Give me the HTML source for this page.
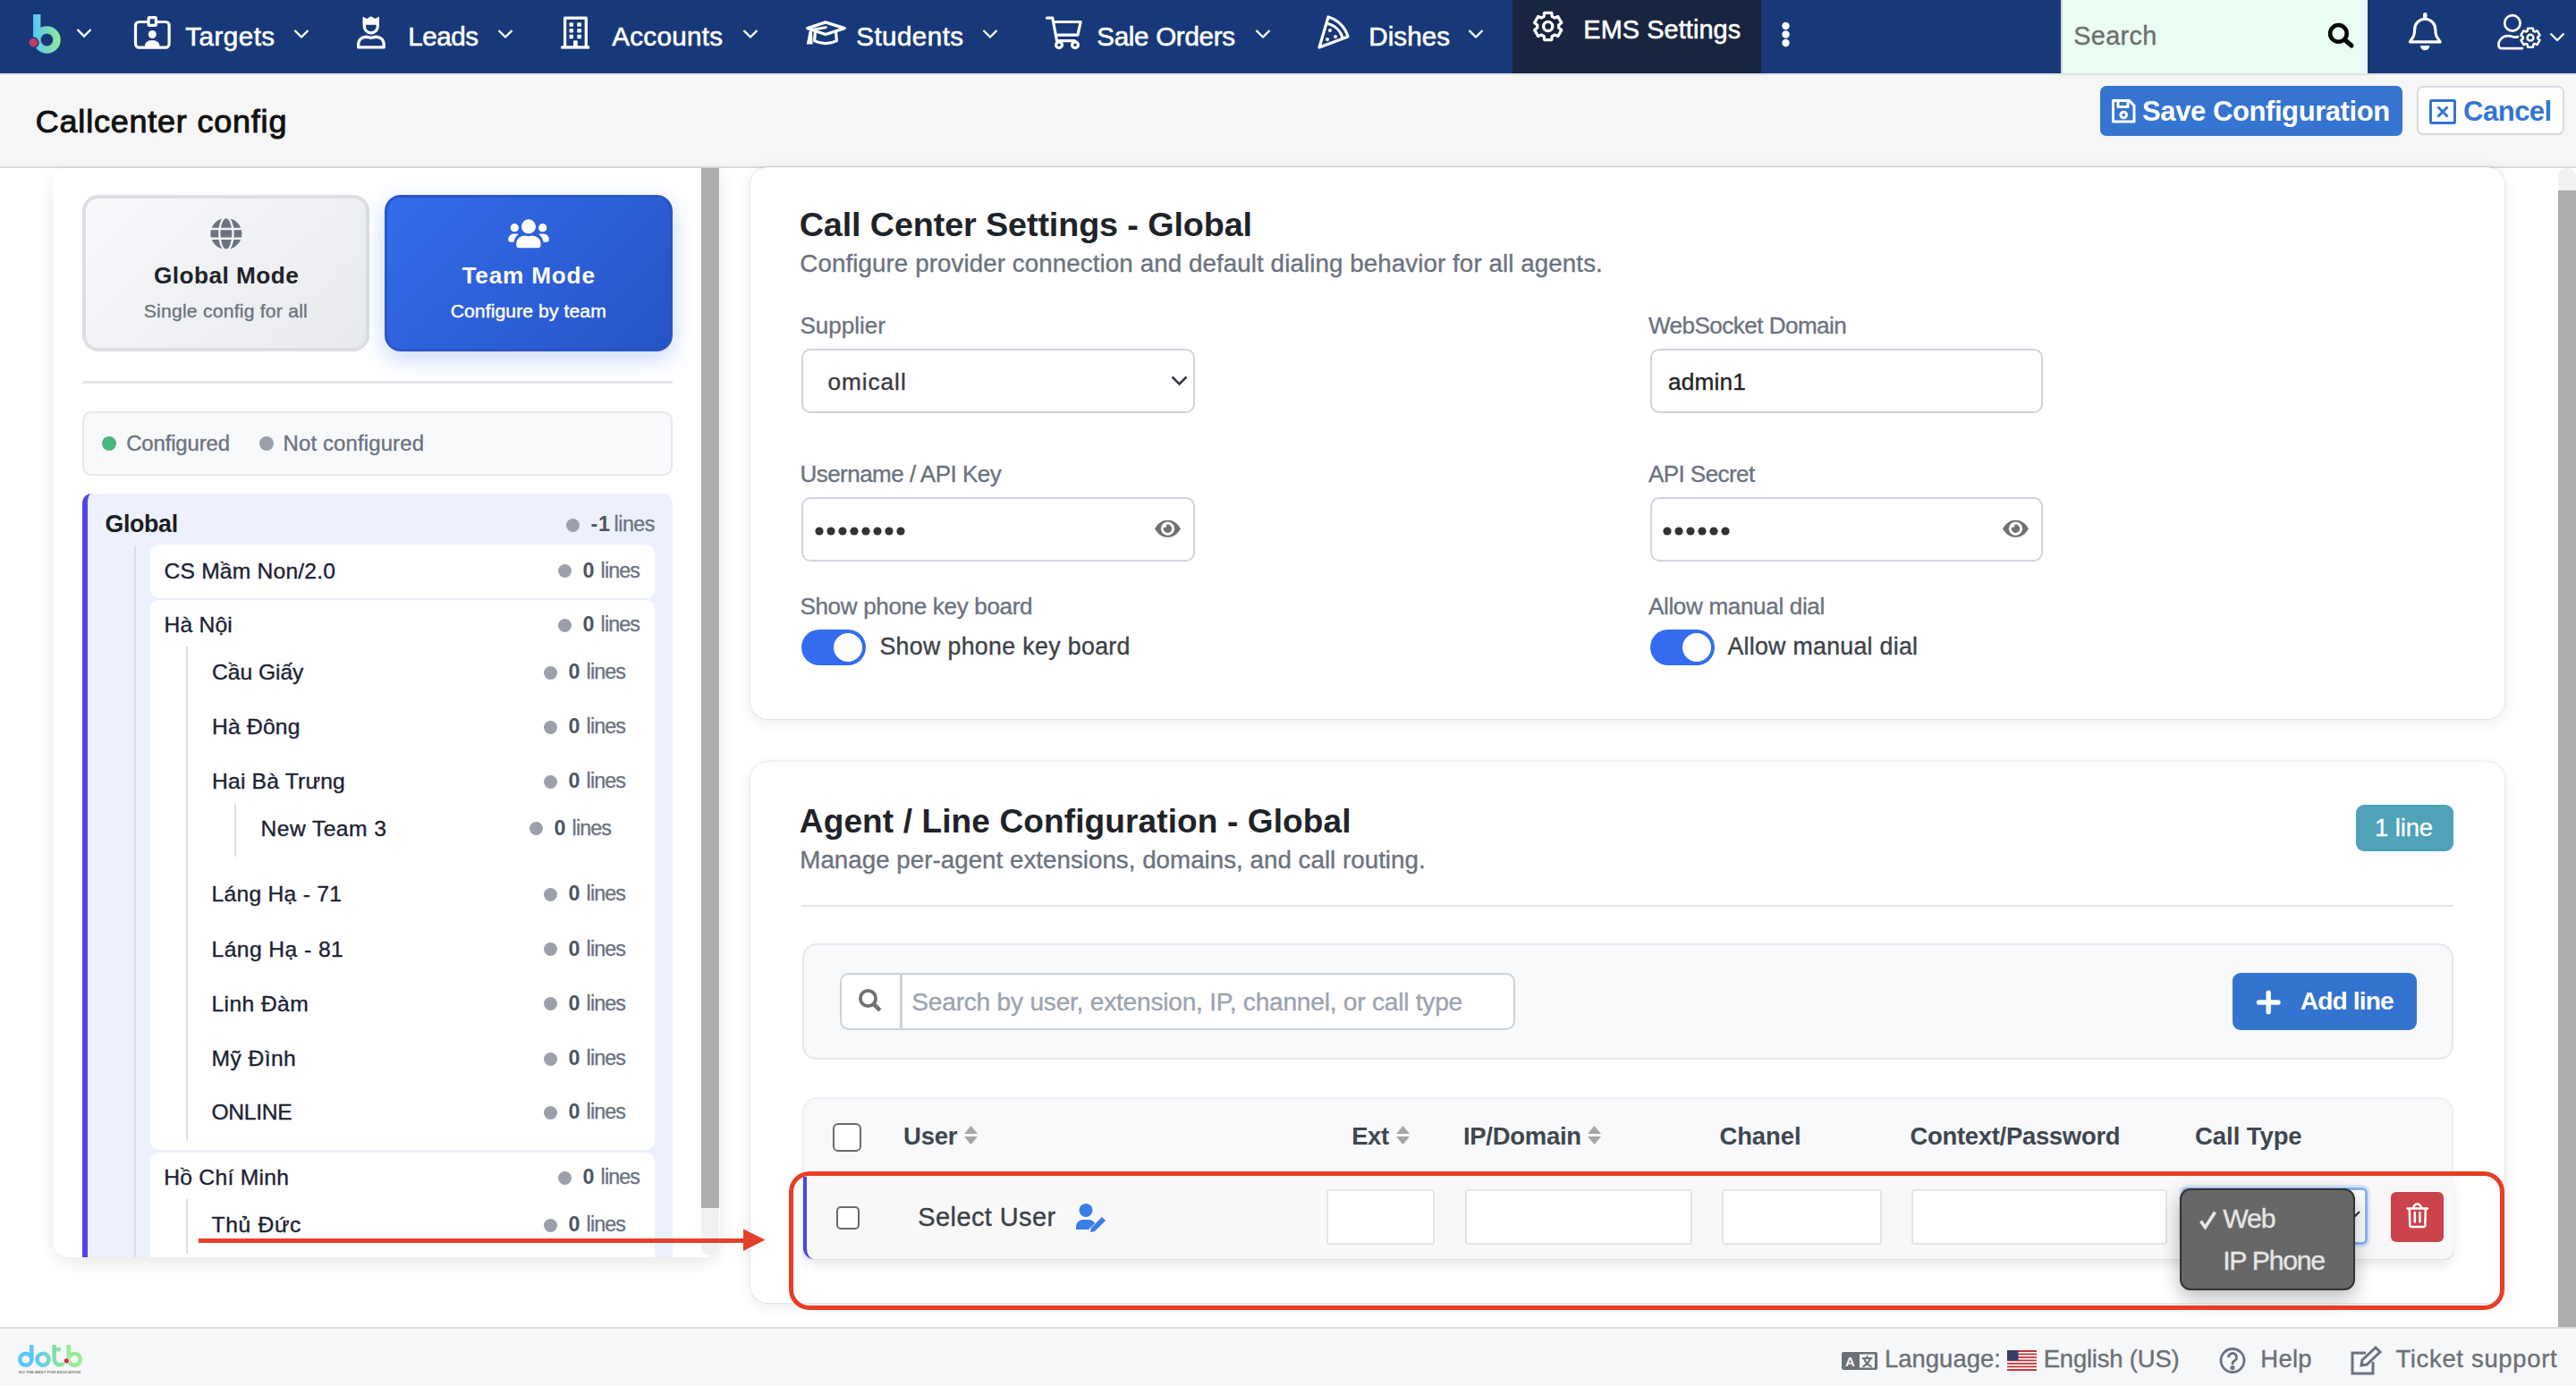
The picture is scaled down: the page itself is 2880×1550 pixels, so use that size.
<!DOCTYPE html>
<html><head><meta charset="utf-8">
<style>
*{box-sizing:border-box;margin:0;padding:0}
html,body{width:2880px;height:1550px;overflow:hidden;background:#fff;font-family:"Liberation Sans",sans-serif}
.a{position:absolute}
.t{position:absolute;white-space:nowrap;line-height:1;font-family:"Liberation Sans",sans-serif}
.dot{position:absolute;width:15px;height:15px;border-radius:50%;background:#9ca0ab}
svg{position:absolute;overflow:visible}
</style></head><body>
<!-- NAVBAR -->
<div class="a" style="left:0;top:0;width:2880px;height:82px;background:#183979"></div>
<div class="a" style="left:1691px;top:0;width:278px;height:82px;background:#192441"></div>
<div class="a" style="left:2304px;top:0;width:343px;height:82px;background:#e9fdf2;border-left:2px solid #d6d6d6"></div>
<!-- logo b -->
<svg style="left:0;top:0" width="120" height="82">
 <defs>
  <linearGradient id="lg1" gradientUnits="userSpaceOnUse" x1="37" x2="68" y1="0" y2="0"><stop offset="0" stop-color="#58c6f4"/><stop offset="1" stop-color="#95e996"/></linearGradient>
  <linearGradient id="lg2" gradientUnits="userSpaceOnUse" x1="32" x2="43" y1="0" y2="0"><stop offset="0" stop-color="#a83e9a"/><stop offset="1" stop-color="#e2352a"/></linearGradient>
 </defs>
 <rect x="37.1" y="16" width="8.3" height="30" fill="url(#lg1)"/>
 <circle cx="52.4" cy="44.5" r="11.1" fill="none" stroke="url(#lg1)" stroke-width="8.4"/>
 <circle cx="37.3" cy="47.7" r="5.6" fill="url(#lg2)" stroke="#183979" stroke-width="1.6"/>
 <polyline points="86.5,33 94,40.5 101.5,33" fill="none" stroke="#fff" stroke-width="2.4"/>
</svg>
<!-- nav icons -->
<svg style="left:0;top:0" width="2880" height="82" fill="none" stroke="#fff" stroke-width="3.2" stroke-linejoin="round">
 <!-- targets badge -->
 <rect x="151.5" y="24.5" width="37.6" height="28.7" rx="4"/>
 <rect x="166.1" y="19.7" width="8.3" height="8.6" rx="1" fill="#183979"/>
 <circle cx="170.3" cy="38.5" r="4.5" fill="#fff" stroke="none"/>
 <path d="M162 53 v-3 a8.2 5.5 0 0 1 16.3 0 v3 z" fill="#fff" stroke="none"/>
 <polyline points="329.5,34 337,41.5 344.5,34" stroke-width="2.4"/>
 <!-- leads -->
 <path d="M405.7 18.5 L410 21 L414.8 18.3 L419.5 21 L423.9 18.5 V27.7 H405.7 Z" fill="#fff" stroke="none"/>
 <path d="M407.35 20 V29.4 A7.45 7.45 0 0 0 422.25 29.4 V20" stroke-width="3.3"/>
 <path d="M400.65 52.95 V50 C400.65 44 405 41.25 409 41.25 C412 41.25 413.5 42.3 414.9 42.3 C416.3 42.3 417.8 41.25 420.8 41.25 C424.8 41.25 429.15 44 429.15 50 V52.95 Z" stroke-width="3.3"/>
 <polyline points="557.5,34 565,41.5 572.5,34" stroke-width="2.4"/>
 <!-- accounts building -->
 <path d="M631.6 52 V20.1 h23.7 V52" stroke-width="3.3"/>
 <path d="M627.3 52.9 h31.7" stroke-width="3.4"/>
 <g fill="#fff" stroke="none"><rect x="636.5" y="25.2" width="4.5" height="4.5" rx="1"/><rect x="645.3" y="25.2" width="4.6" height="4.5" rx="1"/><rect x="636.5" y="32" width="4.5" height="4.4" rx="1"/><rect x="645.3" y="32" width="4.6" height="4.4" rx="1"/><rect x="636.5" y="38.8" width="4.5" height="4.4" rx="1"/><rect x="645.3" y="38.8" width="4.6" height="4.4" rx="1"/><rect x="641" y="45.2" width="4.7" height="7" rx="1"/></g>
 <polyline points="831.5,34 839,41.5 846.5,34" stroke-width="2.4"/>
 <!-- students grad cap -->
 <path d="M902.6 31.6 L923 24.9 L944.2 31.6 L923 38.5 Z" stroke-width="3.3"/>
 <path d="M923.5 30.6 L906.5 33.5" stroke-width="2.8" stroke-linecap="round"/>
 <path d="M904.6 35 L908 35 L908.6 49.6 L901.8 49.6 Z" fill="#fff" stroke="none"/>
 <path d="M911.4 36.2 L910.6 45.6 Q923 51.8 935.4 45.6 L934.6 36.2" stroke-width="3.2"/>
 <polyline points="1099.5,34 1107,41.5 1114.5,34" stroke-width="2.4"/>
 <!-- cart -->
 <path d="M1170.5 20.2 h6.3 l4.8 25.5 h19.8" stroke-linecap="round"/>
 <path d="M1177.8 24.5 h30.4 l-3.3 14.7 h-23.6"/>
 <circle cx="1184" cy="50.2" r="3.4"/><circle cx="1202" cy="50.2" r="3.4"/>
 <polyline points="1404.5,34 1412,41.5 1419.5,34" stroke-width="2.4"/>
 <!-- pizza -->
 <path d="M1475 53 l10 -34 a32 32 0 0 1 22 22 z"/>
 <path d="M1483 26 a24 24 0 0 1 18 16"/>
 <g fill="#fff" stroke="none"><circle cx="1487" cy="34" r="2"/><circle cx="1493" cy="41" r="2"/><circle cx="1484" cy="44" r="2"/></g>
 <polyline points="1642.5,34 1650,41.5 1657.5,34" stroke-width="2.4"/>
 <!-- gear -->
 <path d="M1726.10 18.42 L1726.70 14.42 L1734.70 14.42 L1735.30 18.42 A12.0 12.0 0 0 1 1738.00 19.97 L1741.76 18.50 L1745.76 25.42 L1742.60 27.94 A12.0 12.0 0 0 1 1742.60 31.06 L1745.76 33.58 L1741.76 40.50 L1738.00 39.03 A12.0 12.0 0 0 1 1735.30 40.58 L1734.70 44.58 L1726.70 44.58 L1726.10 40.58 A12.0 12.0 0 0 1 1723.40 39.03 L1719.64 40.50 L1715.64 33.58 L1718.80 31.06 A12.0 12.0 0 0 1 1718.80 27.94 L1715.64 25.42 L1719.64 18.50 L1723.40 19.97 A12.0 12.0 0 0 1 1726.10 18.42 Z" stroke-width="3.3"/><circle cx="1730.7" cy="29.5" r="5.1" stroke-width="3.4"/>
 <!-- kebab -->
 <g fill="#fff" stroke="none"><circle cx="1996.5" cy="29" r="4.2"/><circle cx="1996.5" cy="38.5" r="4.2"/><circle cx="1996.5" cy="48" r="4.2"/></g>
 <!-- bell -->
 <path d="M2694.4 46.8 L2698.4 40.5 Q2699.6 37.5 2699.6 33 A11.6 11.8 0 0 1 2722.8 33 Q2722.8 37.5 2724 40.5 L2728.1 46.8 Z"/>
 <path d="M2706 51 a5.2 5.2 0 0 0 10.4 0 z" fill="#fff" stroke="none"/>
 <rect x="2709" y="14" width="4.6" height="7" rx="2.3" fill="#fff" stroke="none"/>
 <!-- user gear -->
 <circle cx="2808.9" cy="25.9" r="8.7" stroke-width="2.7"/>
 <path d="M2820 54.1 H2796.5 a3 3 0 0 1 -3 -3 v-1.5 a10.5 9.5 0 0 1 10.5 -9.5 q3 0 5 1 q2.5 1 6 0" stroke-width="2.7" stroke-linecap="round"/>
 <path d="M2825.60 34.74 L2826.10 31.69 L2831.90 31.69 L2832.40 34.74 A8.2 8.2 0 0 1 2833.76 35.52 L2836.65 34.43 L2839.55 39.46 L2837.16 41.41 A8.2 8.2 0 0 1 2837.16 42.99 L2839.55 44.94 L2836.65 49.97 L2833.76 48.88 A8.2 8.2 0 0 1 2832.40 49.66 L2831.90 52.71 L2826.10 52.71 L2825.60 49.66 A8.2 8.2 0 0 1 2824.24 48.88 L2821.35 49.97 L2818.45 44.94 L2820.84 42.99 A8.2 8.2 0 0 1 2820.84 41.41 L2818.45 39.46 L2821.35 34.43 L2824.24 35.52 A8.2 8.2 0 0 1 2825.60 34.74 Z" stroke-width="2.5" fill="#183979"/><circle cx="2829" cy="42.2" r="3.4" stroke-width="2.5"/>
 <polyline points="2851.5,37.5 2859,45 2866.5,37.5" stroke-width="2.4"/>
</svg>
<!-- search icon black -->
<svg style="left:2600px;top:22px" width="34" height="34"><circle cx="14.4" cy="15.4" r="9.3" fill="none" stroke="#000" stroke-width="4.5"/><line x1="21.5" y1="22.5" x2="29" y2="29" stroke="#000" stroke-width="5" stroke-linecap="round"/></svg>

<!-- PAGE HEADER -->
<div class="a" style="left:0;top:82px;width:2880px;height:106px;background:#f6f6f6;border-top:2px solid #dfe3e8;border-bottom:2px solid #dadada"></div>
<div class="a" style="left:2348px;top:96px;width:338px;height:56px;background:#3574d0;border-radius:7px"></div>
<svg style="left:2360px;top:110px" width="30" height="30" fill="none" stroke="#fff" stroke-width="3" stroke-linejoin="round"><path d="M2.5 2.5 h18 l5.5 5.5 v18 h-23.5 z"/><path d="M8 2.5 v7 h11 v-7"/><circle cx="14.2" cy="18.5" r="3.3"/></svg>
<div class="a" style="left:2702px;top:96px;width:165px;height:55px;background:#fff;border:2px solid #d7dbe2;border-radius:7px"></div>
<svg style="left:2715px;top:110px" width="32" height="30" fill="none" stroke="#3575d3" stroke-width="3"><rect x="2.5" y="2.5" width="27" height="25" rx="1"/><path d="M10.5 9.5 l11 11 M21.5 9.5 l-11 11"/></svg>

<!-- MAIN AREA -->
<div class="a" style="left:0;top:188px;width:2880px;height:1296px;background:#fff"></div>
<!-- right page scrollbar -->
<div class="a" style="left:2860px;top:188px;width:20px;height:1296px;background:#f1f1f1;border-radius:10px 10px 0 0"></div>
<div class="a" style="left:2860px;top:213px;width:20px;height:1271px;background:#adadad"></div>

<!-- LEFT CARD -->
<div class="a" style="left:59px;top:188px;width:746px;height:1218px;background:#fff;border-radius:16px 0 18px 18px;box-shadow:0 6px 18px rgba(0,0,0,0.09)"></div>
<div class="a" style="left:59px;top:188px;width:725px;height:1218px;overflow:hidden;border-radius:16px 0 0 18px">
 <div class="a" style="left:33px;top:30px;width:321px;height:175px;border:4px solid #dcdee3;border-radius:18px;background:linear-gradient(135deg,#f7f8fa,#e8eaee)"></div>
 <div class="a" style="left:371px;top:30px;width:322px;height:175px;border:3px solid #2a55c6;border-radius:18px;background:linear-gradient(135deg,#346cec,#2654c4);box-shadow:0 8px 26px rgba(52,108,236,0.28)"></div>
 <div class="a" style="left:33px;top:238px;width:660px;height:3px;background:#e3e5ea"></div>
 <div class="a" style="left:33px;top:272px;width:660px;height:72px;background:#f8f9fb;border:2px solid #e6e8ec;border-radius:10px"></div>
 <div class="a" style="left:55px;top:300px;width:16px;height:16px;border-radius:50%;background:#4bb67f"></div>
 <div class="a" style="left:231px;top:300px;width:16px;height:16px;border-radius:50%;background:#9ca0ab"></div>
 <!-- tree -->
 <div class="a" style="left:33px;top:364px;width:660px;height:900px;background:#edf1fd;border-left:6px solid #4f46e5;border-radius:10px 10px 0 0"></div>
 <div class="a" style="left:91px;top:422px;width:2px;height:800px;background:#dcdfe7"></div>
 <div class="a" style="left:109px;top:421px;width:564px;height:60px;background:#fff;border-radius:10px"></div>
 <div class="a" style="left:109px;top:483px;width:564px;height:615px;background:#fff;border-radius:10px"></div>
 <div class="a" style="left:149px;top:535px;width:2px;height:552px;background:#dcdfe7"></div>
 <div class="a" style="left:203px;top:711px;width:2px;height:59px;background:#dcdfe7"></div>
 <div class="a" style="left:109px;top:1101px;width:564px;height:200px;background:#fff;border-radius:10px"></div>
 <div class="a" style="left:149px;top:1153px;width:2px;height:61px;background:#dcdfe7"></div>
 <!-- icons -->
 <svg style="left:176px;top:55px" width="36" height="38"><circle cx="17.9" cy="18.4" r="17.5" fill="#6b7280"/><g fill="none" stroke="#f2f3f5" stroke-width="2.4"><ellipse cx="17.9" cy="18.4" rx="7.6" ry="18.4"/><line x1="0" y1="13" x2="36" y2="13"/><line x1="0" y1="23.8" x2="36" y2="23.8"/></g></svg>
 <svg style="left:509px;top:57px" width="46" height="33" fill="#fff"><circle cx="23" cy="8.3" r="8"/><circle cx="7.3" cy="9.7" r="4.6"/><circle cx="38.7" cy="9.7" r="4.6"/><path d="M9.3 29 v-2 a10 8.5 0 0 1 10 -8.5 q3.7 1.5 7.4 0 a10 8.5 0 0 1 9.8 8.5 v2 a3.2 3.2 0 0 1 -3.2 3.2 h-20.8 a3.2 3.2 0 0 1 -3.2 -3.2 z"/><path d="M0.2 22.5 a6 6 0 0 1 6 -6 h5.8 q-4.5 3.5 -5.6 9.3 h-3 a3.2 3.2 0 0 1 -3.2 -3.3 z"/><path d="M45.8 22.5 a6 6 0 0 0 -6 -6 h-5.8 q4.5 3.5 5.6 9.3 h3 a3.2 3.2 0 0 0 3.2 -3.3 z"/></svg>
</div>
<!-- left inner scrollbar -->
<div class="a" style="left:784px;top:188px;width:20px;height:1163px;background:#adadad"></div>
<div class="a" style="left:784px;top:1351px;width:20px;height:53px;background:#f1f1f1;border-radius:0 0 10px 10px"></div>
<div class="dot" style="left:624.0px;top:631.1px"></div><div class="dot" style="left:624.0px;top:691.5px"></div><div class="dot" style="left:608.0px;top:744.5px"></div><div class="dot" style="left:608.0px;top:805.5px"></div><div class="dot" style="left:608.0px;top:866.5px"></div><div class="dot" style="left:592.0px;top:919.0px"></div><div class="dot" style="left:608.0px;top:992.5px"></div><div class="dot" style="left:608.0px;top:1054.0px"></div><div class="dot" style="left:608.0px;top:1115.0px"></div><div class="dot" style="left:608.0px;top:1176.5px"></div><div class="dot" style="left:608.0px;top:1236.5px"></div><div class="dot" style="left:624.0px;top:1309.5px"></div><div class="dot" style="left:608.0px;top:1362.5px"></div><div class="dot" style="left:633.0px;top:579.5px"></div>

<!-- CARD 1 -->
<div class="a" style="left:839px;top:187px;width:1961px;height:617px;background:#fff;border-radius:20px;box-shadow:0 0 0 1.5px rgba(0,0,0,0.045),0 4px 18px rgba(0,0,0,0.08)"></div>
<div class="a" style="left:896px;top:390px;width:440px;height:71.5px;border:2px solid #cfd5de;border-radius:10px;background:#fff"></div>
<svg style="left:1308px;top:418px" width="22" height="16"><polyline points="2.5,3.5 10.5,11.5 18.5,3.5" fill="none" stroke="#343a40" stroke-width="2.6"/></svg>
<div class="a" style="left:1844.5px;top:390px;width:439px;height:71.5px;border:2px solid #cfd5de;border-radius:10px;background:#fff"></div>
<div class="a" style="left:896px;top:556px;width:440px;height:72px;border:2px solid #cfd5de;border-radius:10px;background:#fff"></div>
<div class="a" style="left:1844.5px;top:556px;width:439px;height:72px;border:2px solid #cfd5de;border-radius:10px;background:#fff"></div>
<!-- password dots -->
<svg style="left:910px;top:586px" width="110" height="16" fill="#333"><circle cx="6" cy="8" r="4.6"/><circle cx="19" cy="8" r="4.6"/><circle cx="32" cy="8" r="4.6"/><circle cx="45" cy="8" r="4.6"/><circle cx="58" cy="8" r="4.6"/><circle cx="71" cy="8" r="4.6"/><circle cx="84" cy="8" r="4.6"/><circle cx="97" cy="8" r="4.6"/></svg>
<svg style="left:1858px;top:586px" width="84" height="16" fill="#333"><circle cx="6" cy="8" r="4.6"/><circle cx="19" cy="8" r="4.6"/><circle cx="32" cy="8" r="4.6"/><circle cx="45" cy="8" r="4.6"/><circle cx="58" cy="8" r="4.6"/><circle cx="71" cy="8" r="4.6"/></svg>
<!-- eyes -->
<svg style="left:1290px;top:580px" width="32" height="22"><path d="M1 11.2 C6 3 11 1.7 15.5 1.7 C20 1.7 25 3 30 11.2 C25 19.4 20 20.8 15.5 20.8 C11 20.8 6 19.4 1 11.2 Z" fill="#707070"/><circle cx="15.5" cy="11.2" r="7.6" fill="#fff"/><circle cx="15.5" cy="11.2" r="4.7" fill="#707070"/><circle cx="12" cy="7.8" r="2.3" fill="#fff"/></svg>
<svg style="left:2238px;top:580px" width="32" height="22"><path d="M1 11.2 C6 3 11 1.7 15.5 1.7 C20 1.7 25 3 30 11.2 C25 19.4 20 20.8 15.5 20.8 C11 20.8 6 19.4 1 11.2 Z" fill="#707070"/><circle cx="15.5" cy="11.2" r="7.6" fill="#fff"/><circle cx="15.5" cy="11.2" r="4.7" fill="#707070"/><circle cx="12" cy="7.8" r="2.3" fill="#fff"/></svg>
<!-- toggles -->
<div class="a" style="left:896px;top:704px;width:72px;height:40px;background:#346cef;border-radius:20px"></div>
<div class="a" style="left:932px;top:708px;width:32px;height:32px;background:#fff;border-radius:50%"></div>
<div class="a" style="left:1844.5px;top:704px;width:72px;height:40px;background:#346cef;border-radius:20px"></div>
<div class="a" style="left:1880.5px;top:708px;width:32px;height:32px;background:#fff;border-radius:50%"></div>

<!-- CARD 2 -->
<div class="a" style="left:839px;top:851.5px;width:1961px;height:605px;background:#fff;border-radius:20px;box-shadow:0 0 0 1.5px rgba(0,0,0,0.045),0 4px 18px rgba(0,0,0,0.08)"></div>
<div class="a" style="left:2633.5px;top:900px;width:109.5px;height:52px;background:#4fa2b7;border-radius:9px"></div>
<div class="a" style="left:896px;top:1012px;width:1847px;height:2px;background:#e3e5e8"></div>
<div class="a" style="left:897px;top:1055px;width:1846px;height:130px;background:#f8f9fa;border:2px solid #e6e8eb;border-radius:16px"></div>
<div class="a" style="left:938.5px;top:1087.5px;width:755px;height:64.5px;background:#fff;border:2px solid #cbd2da;border-radius:10px"></div>
<div class="a" style="left:1006px;top:1089px;width:2.5px;height:61px;background:#cbd2da"></div>
<svg style="left:958px;top:1104px" width="30" height="30"><circle cx="12.5" cy="12.5" r="8.6" fill="none" stroke="#717171" stroke-width="3.8"/><line x1="18.6" y1="18.6" x2="25.8" y2="25.8" stroke="#717171" stroke-width="4.6"/></svg>
<div class="a" style="left:2496px;top:1088px;width:206px;height:63.5px;background:#3474d1;border-radius:9px"></div>
<svg style="left:2521px;top:1121px;overflow:visible" width="1" height="1"><path d="M4.5 0 h21.5 M15.2 -10.7 v21.5" stroke="#fff" stroke-width="5.4" stroke-linecap="round"/></svg>
<!-- table -->
<div class="a" style="left:897px;top:1227px;width:1846px;height:182px;background:#f8f9fb;border:2px solid #eef0f3;border-radius:16px 16px 8px 8px"></div>
<div class="a" style="left:931px;top:1256px;width:32px;height:32px;background:#fff;border:2px solid #6a6a6a;border-radius:6px"></div>
<svg style="left:0;top:0" width="2880" height="1550" fill="#a5a5a5">
 <path d="M1078 1268 l7.5 -9 l7.5 9 z M1078 1271 l7.5 9 l7.5 -9 z"/>
 <path d="M1561 1268 l7.5 -9 l7.5 9 z M1561 1271 l7.5 9 l7.5 -9 z"/>
 <path d="M1775 1268 l7.5 -9 l7.5 9 z M1775 1271 l7.5 9 l7.5 -9 z"/>
</svg>
<div class="a" style="left:898px;top:1315.5px;width:1845px;height:92px;background:#f8f8f8;border-left:4px solid #4f46e5;box-shadow:0 6px 14px rgba(0,0,0,0.09);border-radius:0 0 12px 12px"></div>
<div class="a" style="left:935px;top:1349px;width:26px;height:26px;background:#fff;border:2px solid #6a6a6a;border-radius:5px"></div>
<svg style="left:1203px;top:1346px" width="36" height="30" fill="#3a7de6"><circle cx="11" cy="7.5" r="7.5"/><path d="M0 29 v-3 a8 8 0 0 1 8 -8 h6 a8 8 0 0 1 7 4 l-7 7 z"/><path d="M17 27 l12 -12 l4 4 l-12 12 l-5 1 z"/></svg>
<div class="a" style="left:1482.5px;top:1329.5px;width:121.5px;height:62.5px;background:#fff;border:2px solid #e3e5e8;border-radius:3px"></div>
<div class="a" style="left:1637.5px;top:1329.5px;width:254px;height:62.5px;background:#fff;border:2px solid #e3e5e8;border-radius:3px"></div>
<div class="a" style="left:1924.5px;top:1329.5px;width:179.5px;height:62.5px;background:#fff;border:2px solid #e3e5e8;border-radius:3px"></div>
<div class="a" style="left:2137px;top:1329.5px;width:285.5px;height:62.5px;background:#fff;border:2px solid #e3e5e8;border-radius:3px"></div>
<div class="a" style="left:2438.5px;top:1328px;width:208px;height:64px;background:#fff;border:3px solid #8db4f5;border-radius:6px;box-shadow:0 0 0 3px rgba(13,110,253,0.12)"></div>
<svg style="left:2624px;top:1352px" width="18" height="14"><polyline points="2,3 8,9 14,3" fill="none" stroke="#333" stroke-width="2.2"/></svg>
<div class="a" style="left:2673px;top:1333px;width:59px;height:55.5px;background:#cb434b;border-radius:6px"></div>
<svg style="left:2690px;top:1344px" width="26" height="30" fill="none" stroke="#fff" stroke-width="2.5" stroke-linecap="round" stroke-linejoin="round"><path d="M3.8 8 L4.3 26 a2 2 0 0 0 2 2 h13 a2 2 0 0 0 2 -2 L21.8 8"/><path d="M1.5 7.4 h22.5"/><path d="M8 7 q1.4 -4.6 4.6 -4.6 q3.2 0 4.6 4.6"/><path d="M9.8 12 v10.5 M15.4 12 v10.5"/></svg>
<!-- dropdown popup -->
<div class="a" style="left:2437px;top:1329px;width:196px;height:114px;background:#676767;border:2px solid #333;border-radius:12px;box-shadow:0 8px 22px rgba(0,0,0,0.28)"></div>
<svg style="left:2458px;top:1353px" width="22" height="24"><polyline points="2.5,12.5 7.5,19.5 18.5,2.5" fill="none" stroke="#e8e8e8" stroke-width="3.6"/></svg>

<!-- FOOTER -->
<div class="a" style="left:0;top:1484px;width:2880px;height:66px;background:#f6f7f9;border-top:2px solid #dcdcdc"></div>
<svg style="left:0;top:1490px" width="100" height="50">
 <defs><linearGradient id="dg" gradientUnits="userSpaceOnUse" x1="40" x2="76" y1="0" y2="0"><stop offset="0" stop-color="#5cc6f6"/><stop offset="0.5" stop-color="#7adcb0"/><stop offset="1" stop-color="#9aeb96"/></linearGradient></defs>
 <g fill="none" stroke="url(#dg)" stroke-width="4.5"><circle cx="28.8" cy="30.3" r="6.5"/><path d="M35.3 14 v16.3"/><circle cx="48.1" cy="30.3" r="6.5"/><path d="M60.6 14 v16 a6.5 6.5 0 0 0 11 4.5"/><path d="M62 19.1 h6"/><path d="M76.7 14 v16.3"/><circle cx="83.3" cy="30.3" r="6.5"/></g>
 <circle cx="74.4" cy="31.9" r="3.2" fill="#c8303e" stroke="#f6f7f9" stroke-width="1"/>
 <text x="21" y="46" font-size="4" font-weight="bold" fill="#777" font-family="Liberation Sans" textLength="69" lengthAdjust="spacingAndGlyphs">DO THE BEST FOR EDUCATION</text>
</svg>
<svg style="left:2059px;top:1512px" width="40" height="20"><rect x="0" y="0" width="40" height="20" rx="2" fill="#6b7076"/><rect x="20" y="2.5" width="17" height="15" fill="#f6f7f9"/><text x="4" y="16" font-size="15" font-weight="bold" fill="#f6f7f9" font-family="Liberation Sans">A</text><path d="M28.5 4 v2.2 M22.8 7 h11.5 M25 7.5 q2.5 6 8.5 9 M32 7.5 q-2.5 6 -8.5 9" fill="none" stroke="#6b7076" stroke-width="2"/></svg>
<svg style="left:2243.5px;top:1510px" width="33" height="23"><rect width="33" height="23" fill="#fff"/><g fill="#c4343d"><rect y="0" width="33" height="2"/><rect y="3.5" width="33" height="1.8"/><rect y="7" width="33" height="1.8"/><rect y="10.5" width="33" height="1.8"/><rect y="14" width="33" height="1.8"/><rect y="17.5" width="33" height="1.8"/><rect y="21" width="33" height="2"/></g><rect width="12.5" height="11.5" fill="#3c3b6e"/></svg>
<svg style="left:2481px;top:1506px" width="30" height="31" fill="none" stroke="#6b7280" stroke-width="2.8"><circle cx="15" cy="15.5" r="13"/><path d="M10.5 12 a4.5 4.5 0 1 1 6 4.2 q-1.5 0.8 -1.5 2.8 v1" /><circle cx="15" cy="23.5" r="1.2" fill="#6b7280"/></svg>
<svg style="left:2627px;top:1506px" width="36" height="32" fill="none" stroke="#6b7280" stroke-width="3"><path d="M18 7 h-15 v23 h23 v-13"/><path d="M13 21 l1 -6 l15 -14 l5 5 l-15 14 z"/></svg>

<div class="t" style="left:207.2px;top:25.5px;font-size:29.58px;font-weight:normal;color:#fff;letter-spacing:0.49px;-webkit-text-stroke:0.6px #fff;">Targets</div>
<div class="t" style="left:456.2px;top:25.5px;font-size:29.58px;font-weight:normal;color:#fff;letter-spacing:-0.41px;-webkit-text-stroke:0.6px #fff;">Leads</div>
<div class="t" style="left:684.2px;top:25.5px;font-size:29.58px;font-weight:normal;color:#fff;letter-spacing:0.33px;-webkit-text-stroke:0.6px #fff;">Accounts</div>
<div class="t" style="left:957.2px;top:25.5px;font-size:29.58px;font-weight:normal;color:#fff;letter-spacing:0.46px;-webkit-text-stroke:0.6px #fff;">Students</div>
<div class="t" style="left:1226.2px;top:25.5px;font-size:29.58px;font-weight:normal;color:#fff;letter-spacing:-0.29px;-webkit-text-stroke:0.6px #fff;">Sale Orders</div>
<div class="t" style="left:1530.2px;top:25.5px;font-size:29.58px;font-weight:normal;color:#fff;letter-spacing:0.11px;-webkit-text-stroke:0.6px #fff;">Dishes</div>
<div class="t" style="left:1770.3px;top:18.6px;font-size:28.87px;font-weight:normal;color:#fff;letter-spacing:0.09px;-webkit-text-stroke:0.6px #fff;">EMS Settings</div>
<div class="t" style="left:2318.3px;top:25.6px;font-size:28.87px;font-weight:normal;color:#6e6e6e;letter-spacing:0.29px;-webkit-text-stroke:0.35px #6e6e6e;">Search</div>
<div class="t" style="left:39.8px;top:117.7px;font-size:35.92px;font-weight:normal;color:#111;letter-spacing:0.82px;-webkit-text-stroke:1px #111;">Callcenter config</div>
<div class="t" style="left:2395.1px;top:108.8px;font-size:30.99px;font-weight:bold;color:#fff;letter-spacing:-0.41px;">Save Configuration</div>
<div class="t" style="left:2754.1px;top:108.8px;font-size:30.99px;font-weight:bold;color:#3575d3;letter-spacing:-0.50px;">Cancel</div>
<div class="t" style="left:171.9px;top:294.9px;font-size:26.20px;font-weight:bold;color:#1f2329;letter-spacing:0.47px;">Global Mode</div>
<div class="t" style="left:160.7px;top:337.3px;font-size:21.13px;font-weight:normal;color:#6b7280;letter-spacing:0.23px;-webkit-text-stroke:0.35px #6b7280;">Single config for all</div>
<div class="t" style="left:516.4px;top:294.9px;font-size:26.20px;font-weight:bold;color:#fff;letter-spacing:0.81px;">Team Mode</div>
<div class="t" style="left:503.7px;top:337.3px;font-size:21.13px;font-weight:normal;color:#fff;letter-spacing:0.09px;-webkit-text-stroke:0.45px #fff;">Configure by team</div>
<div class="t" style="left:141.2px;top:483.8px;font-size:23.94px;font-weight:normal;color:#6b7280;letter-spacing:-0.15px;-webkit-text-stroke:0.35px #6b7280;">Configured</div>
<div class="t" style="left:316.6px;top:483.8px;font-size:23.94px;font-weight:normal;color:#6b7280;letter-spacing:0.13px;-webkit-text-stroke:0.35px #6b7280;">Not configured</div>
<div class="t" style="left:117.4px;top:573.4px;font-size:26.76px;font-weight:bold;color:#1a1d23;letter-spacing:-0.31px;">Global</div>
<div class="t" style="left:660.6px;top:575.4px;font-size:23.24px;font-weight:bold;color:#4b5563;letter-spacing:0.65px;">-1</div>
<div class="t" style="left:686.6px;top:575.4px;font-size:23.24px;font-weight:normal;color:#6b7280;letter-spacing:-0.49px;-webkit-text-stroke:0.35px #6b7280;">lines</div>
<div class="t" style="left:183.5px;top:626.8px;font-size:24.65px;font-weight:normal;color:#1c2233;letter-spacing:0.19px;-webkit-text-stroke:0.35px #1c2233;">CS Mầm Non/2.0</div>
<div class="t" style="left:651.6px;top:627.0px;font-size:23.24px;font-weight:bold;color:#4b5563;letter-spacing:0.00px;">0</div>
<div class="t" style="left:671.6px;top:627.0px;font-size:23.24px;font-weight:normal;color:#6b7280;letter-spacing:-0.87px;-webkit-text-stroke:0.35px #6b7280;">lines</div>
<div class="t" style="left:183.5px;top:687.2px;font-size:24.65px;font-weight:normal;color:#1c2233;letter-spacing:0.19px;-webkit-text-stroke:0.35px #1c2233;">Hà Nội</div>
<div class="t" style="left:651.6px;top:687.4px;font-size:23.24px;font-weight:bold;color:#4b5563;letter-spacing:0.00px;">0</div>
<div class="t" style="left:671.6px;top:687.4px;font-size:23.24px;font-weight:normal;color:#6b7280;letter-spacing:-0.87px;-webkit-text-stroke:0.35px #6b7280;">lines</div>
<div class="t" style="left:237.0px;top:740.2px;font-size:24.65px;font-weight:normal;color:#1c2233;letter-spacing:-0.04px;-webkit-text-stroke:0.35px #1c2233;">Cầu Giấy</div>
<div class="t" style="left:635.6px;top:740.4px;font-size:23.24px;font-weight:bold;color:#4b5563;letter-spacing:0.00px;">0</div>
<div class="t" style="left:655.6px;top:740.4px;font-size:23.24px;font-weight:normal;color:#6b7280;letter-spacing:-0.87px;-webkit-text-stroke:0.35px #6b7280;">lines</div>
<div class="t" style="left:237.0px;top:801.2px;font-size:24.65px;font-weight:normal;color:#1c2233;letter-spacing:0.20px;-webkit-text-stroke:0.35px #1c2233;">Hà Đông</div>
<div class="t" style="left:635.6px;top:801.4px;font-size:23.24px;font-weight:bold;color:#4b5563;letter-spacing:0.00px;">0</div>
<div class="t" style="left:655.6px;top:801.4px;font-size:23.24px;font-weight:normal;color:#6b7280;letter-spacing:-0.87px;-webkit-text-stroke:0.35px #6b7280;">lines</div>
<div class="t" style="left:237.0px;top:862.2px;font-size:24.65px;font-weight:normal;color:#1c2233;letter-spacing:0.20px;-webkit-text-stroke:0.35px #1c2233;">Hai Bà Trưng</div>
<div class="t" style="left:635.6px;top:862.4px;font-size:23.24px;font-weight:bold;color:#4b5563;letter-spacing:0.00px;">0</div>
<div class="t" style="left:655.6px;top:862.4px;font-size:23.24px;font-weight:normal;color:#6b7280;letter-spacing:-0.87px;-webkit-text-stroke:0.35px #6b7280;">lines</div>
<div class="t" style="left:291.5px;top:914.7px;font-size:24.65px;font-weight:normal;color:#1c2233;letter-spacing:0.44px;-webkit-text-stroke:0.35px #1c2233;">New Team 3</div>
<div class="t" style="left:619.6px;top:914.9px;font-size:23.24px;font-weight:bold;color:#4b5563;letter-spacing:0.00px;">0</div>
<div class="t" style="left:639.6px;top:914.9px;font-size:23.24px;font-weight:normal;color:#6b7280;letter-spacing:-0.87px;-webkit-text-stroke:0.35px #6b7280;">lines</div>
<div class="t" style="left:236.5px;top:988.2px;font-size:24.65px;font-weight:normal;color:#1c2233;letter-spacing:0.27px;-webkit-text-stroke:0.35px #1c2233;">Láng Hạ - 71</div>
<div class="t" style="left:635.6px;top:988.4px;font-size:23.24px;font-weight:bold;color:#4b5563;letter-spacing:0.00px;">0</div>
<div class="t" style="left:655.6px;top:988.4px;font-size:23.24px;font-weight:normal;color:#6b7280;letter-spacing:-0.87px;-webkit-text-stroke:0.35px #6b7280;">lines</div>
<div class="t" style="left:236.5px;top:1049.7px;font-size:24.65px;font-weight:normal;color:#1c2233;letter-spacing:0.44px;-webkit-text-stroke:0.35px #1c2233;">Láng Hạ - 81</div>
<div class="t" style="left:635.6px;top:1049.9px;font-size:23.24px;font-weight:bold;color:#4b5563;letter-spacing:0.00px;">0</div>
<div class="t" style="left:655.6px;top:1049.9px;font-size:23.24px;font-weight:normal;color:#6b7280;letter-spacing:-0.87px;-webkit-text-stroke:0.35px #6b7280;">lines</div>
<div class="t" style="left:236.5px;top:1110.7px;font-size:24.65px;font-weight:normal;color:#1c2233;letter-spacing:0.39px;-webkit-text-stroke:0.35px #1c2233;">Linh Đàm</div>
<div class="t" style="left:635.6px;top:1110.9px;font-size:23.24px;font-weight:bold;color:#4b5563;letter-spacing:0.00px;">0</div>
<div class="t" style="left:655.6px;top:1110.9px;font-size:23.24px;font-weight:normal;color:#6b7280;letter-spacing:-0.87px;-webkit-text-stroke:0.35px #6b7280;">lines</div>
<div class="t" style="left:236.5px;top:1172.2px;font-size:24.65px;font-weight:normal;color:#1c2233;letter-spacing:0.42px;-webkit-text-stroke:0.35px #1c2233;">Mỹ Đình</div>
<div class="t" style="left:635.6px;top:1172.4px;font-size:23.24px;font-weight:bold;color:#4b5563;letter-spacing:0.00px;">0</div>
<div class="t" style="left:655.6px;top:1172.4px;font-size:23.24px;font-weight:normal;color:#6b7280;letter-spacing:-0.87px;-webkit-text-stroke:0.35px #6b7280;">lines</div>
<div class="t" style="left:236.5px;top:1232.2px;font-size:24.65px;font-weight:normal;color:#1c2233;letter-spacing:-0.32px;-webkit-text-stroke:0.35px #1c2233;">ONLINE</div>
<div class="t" style="left:635.6px;top:1232.4px;font-size:23.24px;font-weight:bold;color:#4b5563;letter-spacing:0.00px;">0</div>
<div class="t" style="left:655.6px;top:1232.4px;font-size:23.24px;font-weight:normal;color:#6b7280;letter-spacing:-0.87px;-webkit-text-stroke:0.35px #6b7280;">lines</div>
<div class="t" style="left:183.2px;top:1305.2px;font-size:24.65px;font-weight:normal;color:#1c2233;letter-spacing:0.28px;-webkit-text-stroke:0.35px #1c2233;">Hồ Chí Minh</div>
<div class="t" style="left:651.6px;top:1305.4px;font-size:23.24px;font-weight:bold;color:#4b5563;letter-spacing:0.00px;">0</div>
<div class="t" style="left:671.6px;top:1305.4px;font-size:23.24px;font-weight:normal;color:#6b7280;letter-spacing:-0.87px;-webkit-text-stroke:0.35px #6b7280;">lines</div>
<div class="t" style="left:236.5px;top:1358.2px;font-size:24.65px;font-weight:normal;color:#1c2233;letter-spacing:0.66px;-webkit-text-stroke:0.35px #1c2233;">Thủ Đức</div>
<div class="t" style="left:635.6px;top:1358.4px;font-size:23.24px;font-weight:bold;color:#4b5563;letter-spacing:0.00px;">0</div>
<div class="t" style="left:655.6px;top:1358.4px;font-size:23.24px;font-weight:normal;color:#6b7280;letter-spacing:-0.87px;-webkit-text-stroke:0.35px #6b7280;">lines</div>
<div class="t" style="left:893.7px;top:232.6px;font-size:37.75px;font-weight:bold;color:#1f2329;letter-spacing:-0.12px;">Call Center Settings - Global</div>
<div class="t" style="left:894.3px;top:281.3px;font-size:27.75px;font-weight:normal;color:#6b7280;letter-spacing:0.08px;-webkit-text-stroke:0.35px #6b7280;">Configure provider connection and default dialing behavior for all agents.</div>
<div class="t" style="left:894.4px;top:350.6px;font-size:26.06px;font-weight:normal;color:#6b7280;letter-spacing:0.00px;-webkit-text-stroke:0.35px #6b7280;">Supplier</div>
<div class="t" style="left:1842.9px;top:350.6px;font-size:26.06px;font-weight:normal;color:#6b7280;letter-spacing:-0.52px;-webkit-text-stroke:0.35px #6b7280;">WebSocket Domain</div>
<div class="t" style="left:925.4px;top:413.8px;font-size:26.20px;font-weight:normal;color:#3a3a3a;letter-spacing:0.97px;-webkit-text-stroke:0.35px #3a3a3a;">omicall</div>
<div class="t" style="left:1864.9px;top:413.8px;font-size:26.20px;font-weight:normal;color:#222;letter-spacing:0.19px;-webkit-text-stroke:0.35px #222;">admin1</div>
<div class="t" style="left:894.4px;top:517.0px;font-size:26.06px;font-weight:normal;color:#6b7280;letter-spacing:-0.54px;-webkit-text-stroke:0.35px #6b7280;">Username / API Key</div>
<div class="t" style="left:1842.9px;top:517.0px;font-size:26.06px;font-weight:normal;color:#6b7280;letter-spacing:-0.57px;-webkit-text-stroke:0.35px #6b7280;">API Secret</div>
<div class="t" style="left:894.4px;top:664.7px;font-size:26.06px;font-weight:normal;color:#6b7280;letter-spacing:-0.33px;-webkit-text-stroke:0.35px #6b7280;">Show phone key board</div>
<div class="t" style="left:1842.9px;top:664.7px;font-size:26.06px;font-weight:normal;color:#6b7280;letter-spacing:-0.33px;-webkit-text-stroke:0.35px #6b7280;">Allow manual dial</div>
<div class="t" style="left:983.4px;top:710.4px;font-size:26.76px;font-weight:normal;color:#3c4249;letter-spacing:0.34px;-webkit-text-stroke:0.35px #3c4249;">Show phone key board</div>
<div class="t" style="left:1931.4px;top:710.4px;font-size:26.76px;font-weight:normal;color:#3c4249;letter-spacing:0.28px;-webkit-text-stroke:0.35px #3c4249;">Allow manual dial</div>
<div class="t" style="left:893.8px;top:899.7px;font-size:37.04px;font-weight:bold;color:#1f2329;letter-spacing:0.11px;">Agent / Line Configuration - Global</div>
<div class="t" style="left:894.3px;top:948.2px;font-size:27.75px;font-weight:normal;color:#6b7280;letter-spacing:0.01px;-webkit-text-stroke:0.35px #6b7280;">Manage per-agent extensions, domains, and call routing.</div>
<div class="t" style="left:2654.9px;top:912.4px;font-size:27.46px;font-weight:normal;color:#fff;letter-spacing:-0.08px;-webkit-text-stroke:0.35px #fff;">1 line</div>
<div class="t" style="left:1019.3px;top:1106.2px;font-size:28.17px;font-weight:normal;color:#9ca3af;letter-spacing:-0.25px;-webkit-text-stroke:0.35px #9ca3af;">Search by user, extension, IP, channel, or call type</div>
<div class="t" style="left:2571.8px;top:1104.7px;font-size:28.17px;font-weight:bold;color:#fff;letter-spacing:-0.89px;">Add line</div>
<div class="t" style="left:1010.1px;top:1256.5px;font-size:27.46px;font-weight:bold;color:#3f4650;letter-spacing:-0.20px;">User</div>
<div class="t" style="left:1511.2px;top:1256.5px;font-size:27.46px;font-weight:bold;color:#3f4650;letter-spacing:-0.39px;">Ext</div>
<div class="t" style="left:1635.9px;top:1256.5px;font-size:27.46px;font-weight:bold;color:#3f4650;letter-spacing:-0.25px;">IP/Domain</div>
<div class="t" style="left:1922.4px;top:1256.5px;font-size:27.46px;font-weight:bold;color:#3f4650;letter-spacing:-0.06px;">Chanel</div>
<div class="t" style="left:2135.4px;top:1256.5px;font-size:27.46px;font-weight:bold;color:#3f4650;letter-spacing:-0.29px;">Context/Password</div>
<div class="t" style="left:2454.1px;top:1256.5px;font-size:27.46px;font-weight:bold;color:#3f4650;letter-spacing:-0.06px;">Call Type</div>
<div class="t" style="left:1026.3px;top:1346.5px;font-size:29.01px;font-weight:normal;color:#3a3f46;letter-spacing:0.40px;-webkit-text-stroke:0.35px #3a3f46;">Select User</div>
<div class="t" style="left:2485.2px;top:1348.4px;font-size:30.28px;font-weight:normal;color:#e6e6e6;letter-spacing:-1.13px;-webkit-text-stroke:0.35px #e6e6e6;">Web</div>
<div class="t" style="left:2485.2px;top:1394.7px;font-size:30.28px;font-weight:normal;color:#e6e6e6;letter-spacing:-1.28px;-webkit-text-stroke:0.35px #e6e6e6;">IP Phone</div>
<div class="t" style="left:2107.0px;top:1506.3px;font-size:27.46px;font-weight:normal;color:#6b7076;letter-spacing:0.01px;-webkit-text-stroke:0.35px #6b7076;">Language:</div>
<div class="t" style="left:2284.7px;top:1506.3px;font-size:27.46px;font-weight:normal;color:#6b7076;letter-spacing:-0.19px;-webkit-text-stroke:0.35px #6b7076;">English (US)</div>
<div class="t" style="left:2527.3px;top:1506.3px;font-size:27.46px;font-weight:normal;color:#6b7076;letter-spacing:0.29px;-webkit-text-stroke:0.35px #6b7076;">Help</div>
<div class="t" style="left:2678.4px;top:1506.3px;font-size:27.46px;font-weight:normal;color:#6b7076;letter-spacing:0.68px;-webkit-text-stroke:0.35px #6b7076;">Ticket support</div>

<!-- red highlight & arrow -->
<div class="a" style="left:881.5px;top:1310px;width:1918.5px;height:154.5px;border:5.5px solid #e63d23;border-radius:23px"></div>
<div class="a" style="left:222px;top:1385px;width:612px;height:5px;background:#e5402a"></div>
<svg style="left:830px;top:1374px" width="27" height="26"><path d="M1 0.5 L25.5 12.5 L1 25 z" fill="#e5402a"/></svg>
</body></html>
